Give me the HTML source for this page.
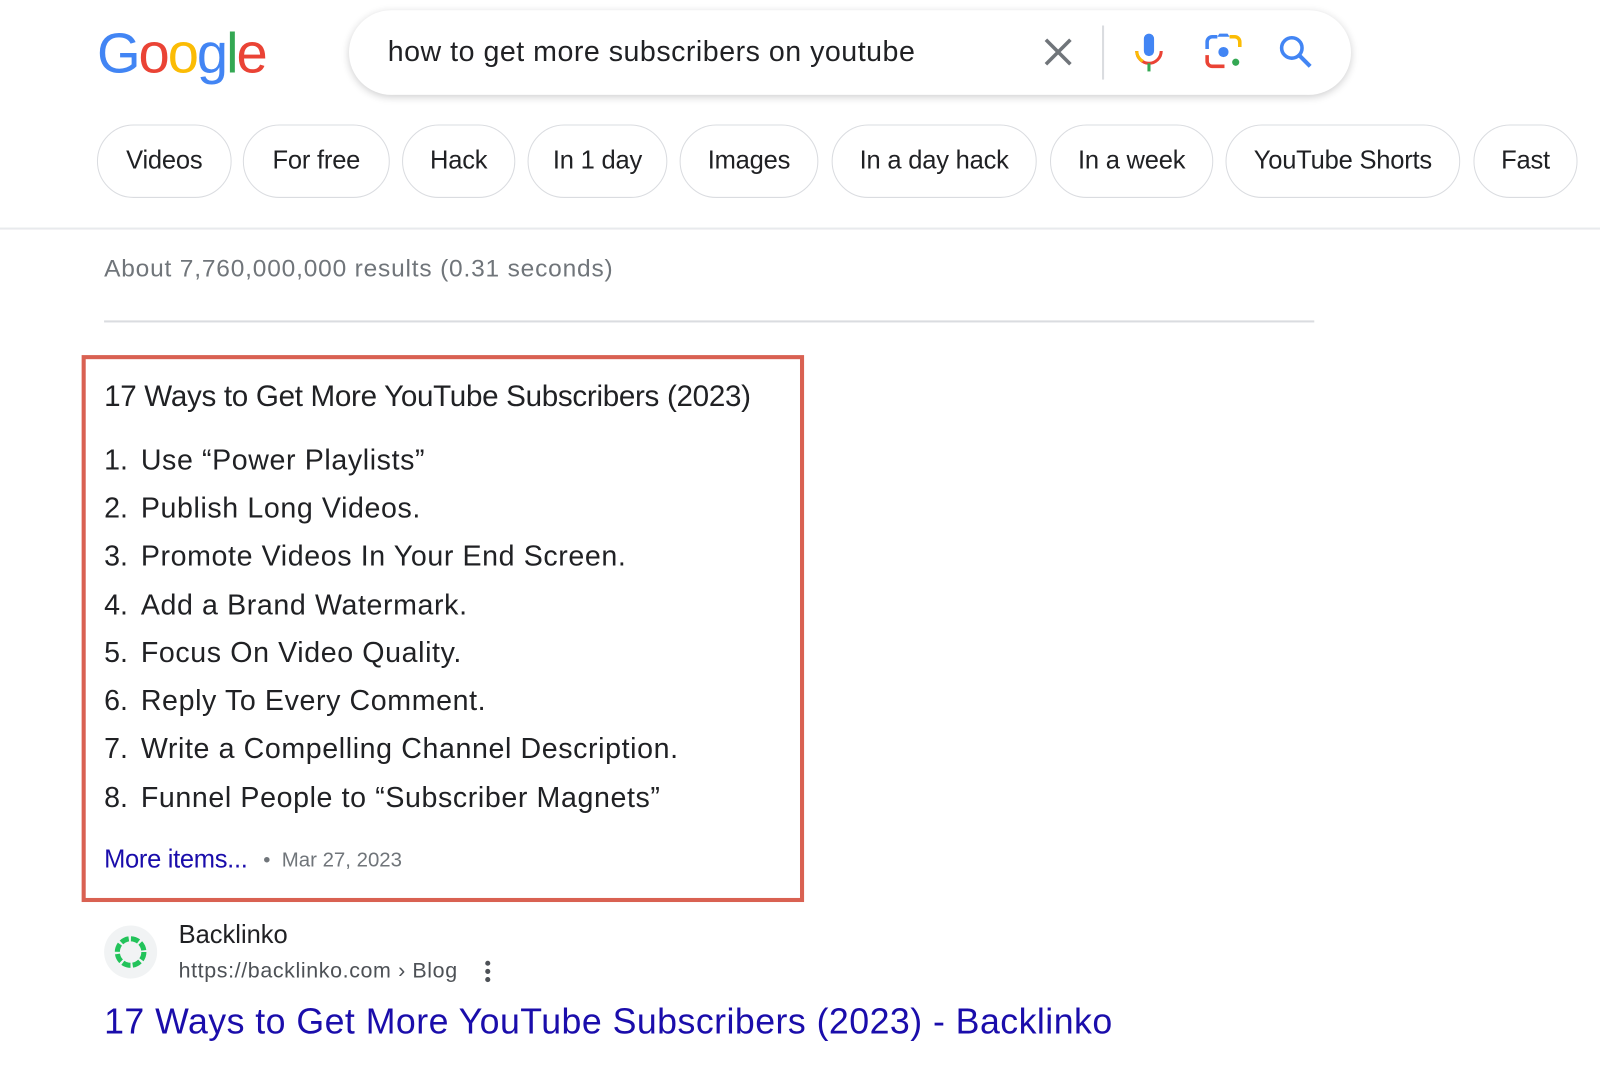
<!DOCTYPE html>
<html><head><meta charset="utf-8">
<style>
*{margin:0;padding:0;box-sizing:border-box}
body{width:1600px;height:1067px;background:#fff;font-family:"Liberation Sans",Arial,sans-serif;position:relative;overflow:hidden;color:#202124}
#w{position:absolute;left:0;top:0;width:1568px;height:1046px;transform:scale(1.0204);transform-origin:0 0}
.abs{position:absolute;white-space:nowrap}
.logo{left:95px;top:20px;font-size:55px;letter-spacing:-2px;font-weight:400}
.search{left:342px;top:10px;width:982px;height:83px;border-radius:42px;box-shadow:0 2px 8px rgba(32,33,36,.22);background:#fff}
.q{left:380px;top:35px;font-size:28px;color:#202124;letter-spacing:0.5px}
.chip{position:absolute;top:122px;height:72px;border:1.5px solid #dadce0;border-radius:36px;font-size:25px;line-height:69px;text-align:center;color:#202124;letter-spacing:-0.2px}
.hr1{left:0;top:223px;width:1600px;height:2px;background:#e8eaed}
.hr2{left:102px;top:314px;width:1186px;height:2px;background:#dadce0}
.box{left:80px;top:348px;width:708px;height:536px;border:4.5px solid #d96152}
.li{left:102px;font-size:28px;letter-spacing:0.6px;color:#202124}
.li b{font-weight:400;display:inline-block;width:36px;letter-spacing:0}
</style></head><body><div id="w">
<div class="abs logo"><span style="color:#4285f4">G</span><span style="color:#ea4335">o</span><span style="color:#fbbc05">o</span><span style="color:#4285f4">g</span><span style="color:#34a853">l</span><span style="color:#ea4335">e</span></div>
<div class="abs search"></div>
<div class="abs q">how to get more subscribers on youtube</div>
<svg class="abs" style="left:1020px;top:34px" width="34" height="34" viewBox="0 0 34 34"><path d="M5 5L29 29M29 5L5 29" stroke="#70757a" stroke-width="3.5"/></svg>
<div class="abs" style="left:1080px;top:25px;width:2px;height:53px;background:#dadce0"></div>
<svg class="abs" style="left:1110px;top:30px" width="32" height="42" viewBox="0 0 32 42"><rect x="11" y="3" width="10" height="22" rx="5" fill="#4285f4"/><path d="M4 20a12 12 0 0 0 24 0" fill="none" stroke="#ea4335" stroke-width="3"/><path d="M4 20a12 12 0 0 0 6 10" fill="none" stroke="#fbbc05" stroke-width="3"/><rect x="14.5" y="32" width="3" height="8" fill="#34a853"/></svg>
<svg class="abs" style="left:1180px;top:32px" width="38" height="38" viewBox="0 0 38 38"><path d="M3 16V9a5 5 0 0 1 5-5h5" fill="none" stroke="#4285f4" stroke-width="3.5"/><path d="M25 4h5a5 5 0 0 1 5 5v5" fill="none" stroke="#fbbc05" stroke-width="3.5"/><path d="M3 22v6a5 5 0 0 0 5 5h12" fill="none" stroke="#ea4335" stroke-width="3.5"/><path d="M13 4l2-3h8l2 3" fill="#4285f4"/><circle cx="19" cy="19" r="5" fill="#4285f4"/><circle cx="31" cy="29" r="3.5" fill="#34a853"/></svg>
<svg class="abs" style="left:1252px;top:33px" width="36" height="36" viewBox="0 0 36 36"><circle cx="14" cy="14" r="10" fill="none" stroke="#4285f4" stroke-width="3.5"/><path d="M21 21l11 11" stroke="#4285f4" stroke-width="4"/></svg>

<div class="chip" style="left:95px;width:132px">Videos</div>
<div class="chip" style="left:238px;width:144px">For free</div>
<div class="chip" style="left:394px;width:111px">Hack</div>
<div class="chip" style="left:517px;width:137px">In 1 day</div>
<div class="chip" style="left:666px;width:136px">Images</div>
<div class="chip" style="left:815px;width:201px">In a day hack</div>
<div class="chip" style="left:1029px;width:160px">In a week</div>
<div class="chip" style="left:1201px;width:230px">YouTube Shorts</div>
<div class="chip" style="left:1444px;width:102px">Fast</div>
<div class="abs hr1" style="width:1600px"></div>
<div class="abs" style="left:102px;top:250px;font-size:24px;color:#70757a;letter-spacing:0.8px">About 7,760,000,000 results (0.31 seconds)</div>
<div class="abs hr2"></div>
<div class="abs box"></div>
<div class="abs li" style="top:373px;font-size:29px;letter-spacing:-0.3px">17 Ways to Get More YouTube Subscribers (2023)</div>
<div class="abs li" style="top:435px"><b>1.</b>Use “Power Playlists”</div>
<div class="abs li" style="top:482px"><b>2.</b>Publish Long Videos.</div>
<div class="abs li" style="top:529px"><b>3.</b>Promote Videos In Your End Screen.</div>
<div class="abs li" style="top:577px"><b>4.</b>Add a Brand Watermark.</div>
<div class="abs li" style="top:624px"><b>5.</b>Focus On Video Quality.</div>
<div class="abs li" style="top:671px"><b>6.</b>Reply To Every Comment.</div>
<div class="abs li" style="top:718px"><b>7.</b>Write a Compelling Channel Description.</div>
<div class="abs li" style="top:766px"><b>8.</b>Funnel People to “Subscriber Magnets”</div>
<div class="abs" style="left:102px;top:828px;font-size:25px;color:#1a0dab;letter-spacing:-0.3px">More items...</div>
<div class="abs" style="left:258px;top:832px;font-size:20px;color:#70757a">•&nbsp; Mar 27, 2023</div>
<div class="abs" style="left:102px;top:907px;width:52px;height:52px;border-radius:50%;background:#f1f3f4"></div>
<svg class="abs" style="left:110px;top:915px" width="36" height="36" viewBox="0 0 36 36"><circle cx="18" cy="18" r="13" fill="none" stroke="#22c35a" stroke-width="5" stroke-dasharray="8 2.2"/></svg>
<div class="abs" style="left:175px;top:902px;font-size:25px;color:#202124;letter-spacing:0px">Backlinko</div>
<div class="abs" style="left:175px;top:940px;font-size:21px;color:#4d5156;letter-spacing:0.6px">https://backlinko.com › Blog</div>
<svg class="abs" style="left:472px;top:940px" width="12" height="26" viewBox="0 0 12 26"><circle cx="6" cy="4" r="2.5" fill="#4d5156"/><circle cx="6" cy="12" r="2.5" fill="#4d5156"/><circle cx="6" cy="20" r="2.5" fill="#4d5156"/></svg>
<div class="abs" style="left:102px;top:982px;font-size:35px;color:#1a0dab;letter-spacing:0.45px">17 Ways to Get More YouTube Subscribers (2023) - Backlinko</div>
</div></body></html>
